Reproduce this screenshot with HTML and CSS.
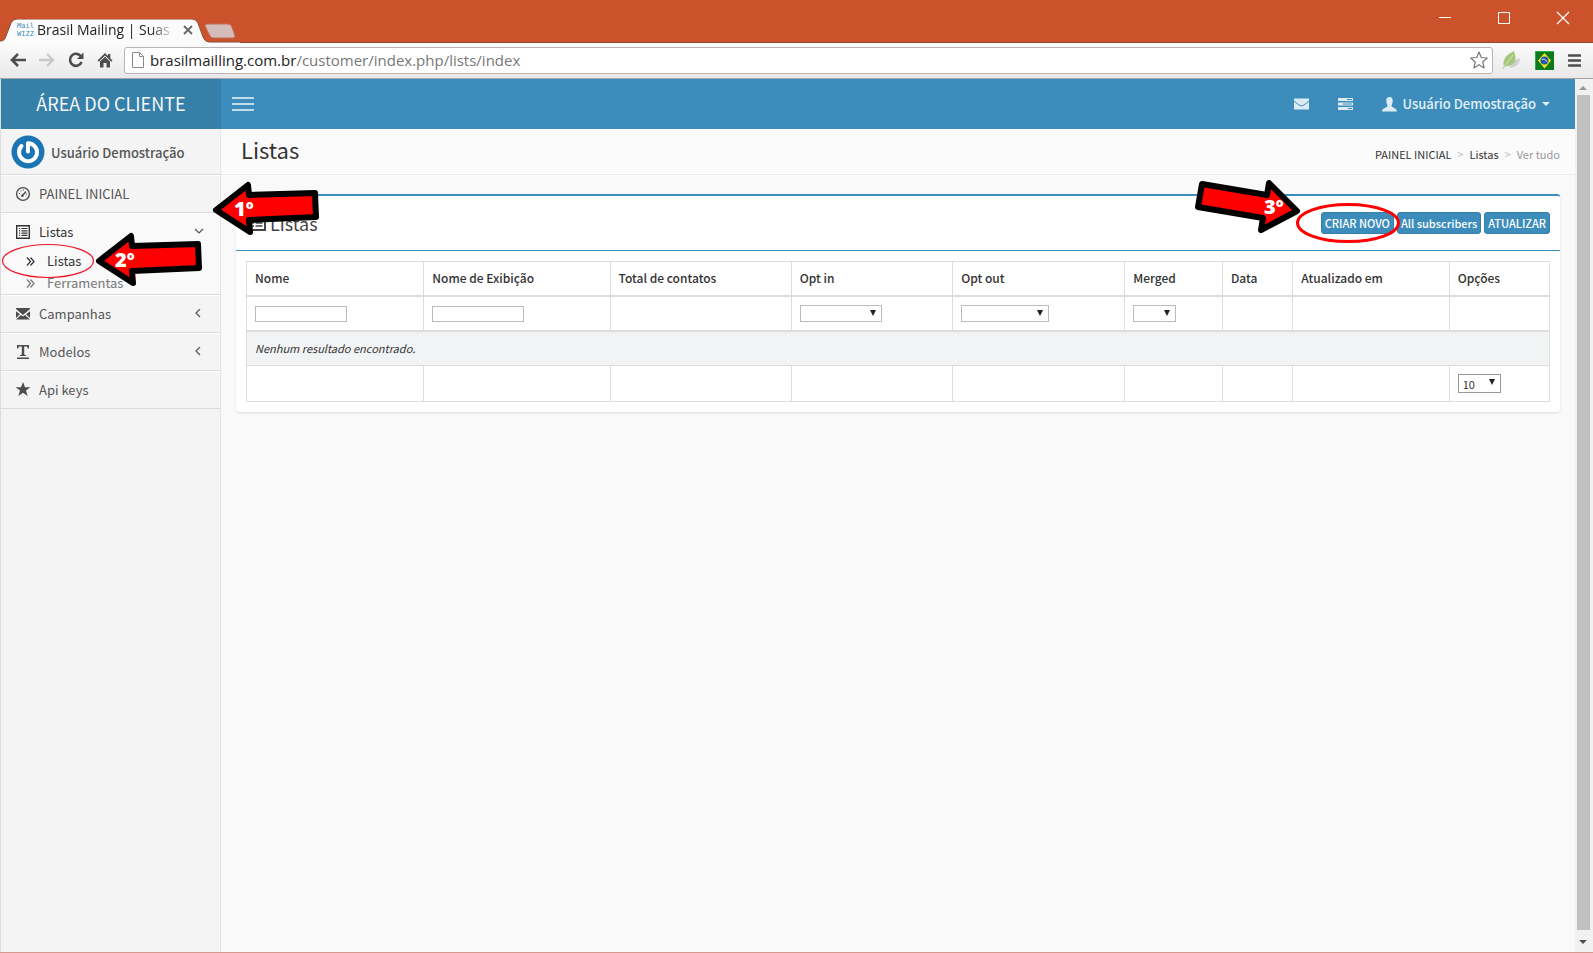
FILE: index.html
```html
<!DOCTYPE html>
<html lang="pt-BR">
<head>
<meta charset="utf-8">
<title>Brasil Mailing | Suas listas</title>
<link rel="stylesheet" href="styles.css">
</head>
<body>
<div class="window">
  <div class="titlebar">
    <svg class="tab-shape" width="240" height="24" viewBox="0 0 240 24">
      <path d="M0 24V22C4 22 5 20 6 17L11 4Q13 0 17 0H192Q196 0 198 4L203 18Q205 23 209 23H240V24Z" fill="#fbfbfb"/>
      <path d="M0 22C4 22 5 20 6 17L11 4Q13 0 17 0H192Q196 0 198 4L203 18Q205 23 209 23H240" fill="none" stroke="#8c4a34"/>
      <path d="M207 5H228Q231 5 232 8L235 17Q235 19 233 19H214Q211 19 210 17L205 7Q205 5 207 5Z" fill="#d3bcb9" stroke="#bd705a" stroke-width="1"/>
    </svg>
    <div class="tab">
      <span class="favicon">Mail<br>WIZZ</span>
      <span class="tab-title">Brasil Mailing | Suas</span>
      <button class="plain tab-close" aria-label="Fechar guia"><svg width="10" height="10" viewBox="0 0 10 10"><path d="M1 1L9 9M9 1L1 9" stroke="#666" stroke-width="1.800"/></svg></button>
    </div>
    <div class="win-controls">
      <button class="plain" aria-label="Minimizar"><svg width="14" height="14" viewBox="0 0 14 14"><path d="M1 6.500H13" stroke="#fff"/></svg></button>
      <button class="plain" aria-label="Maximizar"><svg width="14" height="14" viewBox="0 0 14 14"><path d="M1.500 1.500H12.500V12.500H1.500Z" stroke="#fff" fill="none"/></svg></button>
      <button class="plain" aria-label="Fechar"><svg width="14" height="14" viewBox="0 0 14 14"><path d="M1 1L13 13M13 1L1 13" stroke="#fff" stroke-width="1.200"/></svg></button>
    </div>
  </div>
  <div class="toolbar">
    <button class="plain" aria-label="Voltar"><svg width="16" height="14" viewBox="0 0 16 14"><path d="M8 1L2 7L8 13M2 7H16" fill="none" stroke="#4d4d4d" stroke-width="2.600"/></svg></button>
    <button class="plain" aria-label="Avançar"><svg width="16" height="14" viewBox="0 0 16 14"><path d="M8 1L14 7L8 13M14 7H0" fill="none" stroke="#c9c9c9" stroke-width="2.400"/></svg></button>
    <button class="plain" aria-label="Recarregar"><svg width="16" height="16" viewBox="0 0 16 16"><path d="M13 4.500A6 6 0 1 0 13.600 10" fill="none" stroke="#4d4d4d" stroke-width="2.600"/><path d="M15.500 0.500V7H9Z" fill="#4d4d4d"/></svg></button>
    <button class="plain" aria-label="Página inicial"><svg width="16" height="16" viewBox="0 0 16 16"><path d="M8 1L0.500 8.500L1.700 9.700L8 3.500L14.300 9.700L15.500 8.500L13.300 6.300V2H11V4Z" fill="#4d4d4d"/><path d="M3 9.500L8 4.700L13 9.500V15.500H9.500V11H6.500V15.500H3Z" fill="#4d4d4d"/></svg></button>
    <div class="address">
      <svg width="12" height="16" viewBox="0 0 12 16"><path d="M0.500 0.500H7.500L11.500 4.500V15.500H0.500ZM7.500 0.500V4.500H11.500" fill="#fff" stroke="#8a8a8a"/></svg>
      <span class="url"><span class="host">brasilmailling.com.br</span>/customer/index.php/lists/index</span>
      <svg width="18" height="18" viewBox="0 0 18 18"><path d="M9 1L11.300 6.500L17.300 7L12.700 11L14.100 16.900L9 13.700L3.900 16.900L5.300 11L0.700 7L6.700 6.500Z" fill="#fff" stroke="#777" stroke-width="1.200" stroke-linejoin="round"/></svg>
    </div>
    <div class="extensions">
      <svg width="19" height="20" viewBox="0 0 19 20"><path d="M7 18Q18 17 18 8Q14 9 10 12Z" fill="#cfcfcf"/><path d="M2 17Q-1 7 12 1Q15 9 12 13Q8 17 4 16L1 19L0.500 18Z" fill="#a5c87c"/><path d="M2 17L11 5" stroke="#d6e6bd"/></svg>
      <svg width="19" height="19" viewBox="0 0 19 19"><path d="M0 0H19V19H0Z" fill="#0a7a1c"/><path d="M0 0H19V1H1V19H0Z" fill="#2cae3b"/><path d="M9.500 2L16 9.500L9.500 17.500L3 9.500Z" fill="#f5e51b"/><circle cx="9.500" cy="9.500" r="4" fill="#2559a8"/><path d="M6.500 8Q10 7.500 12.500 11" fill="none" stroke="#cfe0f0"/></svg>
      <button class="plain" aria-label="Menu"><svg width="13" height="13" viewBox="0 0 13 13"><path d="M1 1.500H12M1 6.500H12M1 11.500H12" stroke="#4d4d4d" stroke-width="2.600" stroke-linecap="round"/></svg></button>
    </div>
  </div>

  <div class="viewport">
    <div class="page">
      <header class="topbar">
        <a class="logo" href="#">ÁREA DO CLIENTE</a>
        <nav class="navbar">
          <button class="plain burger" aria-label="Alternar menu"><svg width="22" height="14" viewBox="0 0 22 14"><path d="M0 1H22M0 7H22M0 13H22" stroke="#f0f6fa" stroke-width="1.500"/></svg></button>
          <div class="nav-right">
            <a href="#" aria-label="Mensagens"><svg width="15" height="12" viewBox="0 0 15 12"><path d="M0 0.500H15V11.500H0Z" fill="#dcebf4"/><path d="M0 3L5 7Q7.500 9 10 7L15 3" fill="none" stroke="#3c8dbc"/></svg></a>
            <a href="#" aria-label="Tarefas"><svg width="15" height="12" viewBox="0 0 15 12"><path d="M0 0H15V3H0ZM0 4.500H15V7.500H0ZM0 9H15V12H0Z" fill="#dcebf4"/><path d="M9 1.500H14M5 6H14M10 10.500H14" stroke="#3c8dbc"/></svg></a>
            <a class="account" href="#"><svg width="15" height="15" viewBox="0 0 15 15"><path d="M7.500 0C10 0 11 2 10.700 4.500C10.500 7 9.500 7.500 9.500 9C9.500 10.500 15 11 15 14.500H0C0 11 5.500 10.500 5.500 9C5.500 7.500 4.500 7 4.300 4.500C4 2 5 0 7.500 0Z" fill="#dcebf4"/></svg><b>Usuário Demostração</b><svg width="8" height="4" viewBox="0 0 8 4"><path d="M0 0H8L4 4Z" fill="#e4eff6"/></svg></a>
          </div>
        </nav>
      </header>

      <div class="columns">
        <aside class="sidebar">
          <div class="user">
            <svg width="34" height="34" viewBox="0 0 34 34"><circle cx="17" cy="17" r="16.500" fill="#1b75b5"/><path d="M17 16.500V8.200A9 9 0 1 1 10.500 11" fill="none" stroke="#fff" stroke-width="4" stroke-linecap="round" stroke-linejoin="round"/></svg>
            <span>Usuário Demostração</span>
          </div>
          <ul class="menu">
            <li><a href="#"><svg width="16" height="16" viewBox="0 0 16 16"><circle cx="8" cy="8" r="6.400" fill="none" stroke="#4d4d4d" stroke-width="1.400"/><path d="M7 10L11 5.500" stroke="#4d4d4d" stroke-width="1.400"/><circle cx="7.300" cy="9.700" r="1.300" fill="#4d4d4d"/><path d="M4 7.500H5M5.500 5H6.500M8 4H9M11 8H12" stroke="#4d4d4d"/></svg><span>PAINEL INICIAL</span></a></li>
            <li class="active"><a href="#"><svg width="16" height="16" viewBox="0 0 16 16"><path d="M1.700 1.700H14.300V14.300H1.700Z" fill="#fff" stroke="#333" stroke-width="1.400"/><path d="M4 4.500H5.200M4 6.800H5.200M4 9.100H5.200M4 11.400H5.200M6.500 4.500H12.500M6.500 6.800H12.500M6.500 9.100H12.500M6.500 11.400H12.500" stroke="#333" stroke-width="1.200"/></svg><span>Listas</span><svg class="chev" width="10" height="10" viewBox="0 0 10 10"><path d="M1 2L5 6L9 2" fill="none" stroke="#555" stroke-width="1.200"/></svg></a>
              <ul class="submenu">
                <li class="current"><a href="#"><svg width="9" height="9" viewBox="0 0 9 9"><path d="M1 0.500L4.500 4.500L1 8.500M4.500 0.500L8 4.500L4.500 8.500" fill="none" stroke="#333" stroke-width="1.200"/></svg>Listas</a></li>
                <li><a href="#"><svg width="9" height="9" viewBox="0 0 9 9"><path d="M1 0.500L4.500 4.500L1 8.500M4.500 0.500L8 4.500L4.500 8.500" fill="none" stroke="#777" stroke-width="1.200"/></svg>Ferramentas</a></li>
              </ul>
            </li>
            <li><a href="#"><svg width="16" height="16" viewBox="0 0 16 16"><path d="M1 2H15V3L8 9L1 3ZM1 5.300L5 8.200L1 12ZM15 5.300L11 8.200L15 12ZM1 13.500L6 9L8 10.400L10 9L15 13.500Z" fill="#4d4d4d"/></svg><span>Campanhas</span><svg class="chev" width="10" height="10" viewBox="0 0 10 10"><path d="M6 0L2 4L6 8" fill="none" stroke="#555" stroke-width="1.200"/></svg></a></li>
            <li><a href="#"><svg width="16" height="16" viewBox="0 0 16 16"><path d="M2 1H14V4.500H12.800L12 2.600H9.200V10.400L11 11.200V12H5V11.200L6.800 10.400V2.600H4L3.200 4.500H2ZM2 13.500H14V15H2Z" fill="#4d4d4d"/></svg><span>Modelos</span><svg class="chev" width="10" height="10" viewBox="0 0 10 10"><path d="M6 0L2 4L6 8" fill="none" stroke="#555" stroke-width="1.200"/></svg></a></li>
            <li><a href="#"><svg width="16" height="16" viewBox="0 0 16 16"><path d="M8 0L10 5.300H15.500L11 8.600L12.700 14L8 10.700L3.300 14L5 8.600L0.500 5.300H6Z" fill="#4d4d4d"/></svg><span>Api keys</span></a></li>
          </ul>
        </aside>

        <main class="content">
          <div class="content-header">
            <h1>Listas</h1>
            <nav class="breadcrumb"><a href="#">PAINEL INICIAL</a><i>&gt;</i><a href="#">Listas</a><i>&gt;</i><span>Ver tudo</span></nav>
          </div>
          <section class="box">
            <div class="box-header">
              <h2><svg width="18" height="16" viewBox="0 0 18 16"><path d="M1 1H17V15H1Z" fill="none" stroke="#444" stroke-width="2"/><path d="M4 5H6M4 8H6M4 11H6M7.500 5H14.500M7.500 8H14.500M7.500 11H14.500" stroke="#444" stroke-width="1.600"/></svg>Listas</h2>
              <div class="actions"><button class="btn">CRIAR NOVO</button><button class="btn">All subscribers</button><button class="btn">ATUALIZAR</button></div>
            </div>
            <div class="box-body">
              <table class="grid">
                <colgroup><col class="c-name"><col class="c-display"><col class="c-total"><col class="c-in"><col class="c-out"><col class="c-merged"><col class="c-date"><col class="c-updated"><col class="c-options"></colgroup>
                <thead>
                  <tr><th>Nome</th><th>Nome de Exibição</th><th>Total de contatos</th><th>Opt in</th><th>Opt out</th><th>Merged</th><th>Data</th><th>Atualizado em</th><th>Opções</th></tr>
                  <tr class="filters">
                    <td><input type="text" aria-label="Nome"></td>
                    <td><input type="text" aria-label="Nome de Exibição"></td>
                    <td></td>
                    <td><span class="select opt-in"><select aria-label="Opt in"><option></option></select></span></td>
                    <td><span class="select opt-out"><select aria-label="Opt out"><option></option></select></span></td>
                    <td><span class="select small"><select aria-label="Merged"><option></option></select></span></td>
                    <td></td><td></td><td></td>
                  </tr>
                </thead>
                <tbody><tr class="empty"><td colspan="9">Nenhum resultado encontrado.</td></tr></tbody>
                <tfoot><tr><td></td><td></td><td></td><td></td><td></td><td></td><td></td><td></td><td><span class="select small page-size"><select aria-label="Resultados por página"><option>10</option></select></span></td></tr></tfoot>
              </table>
            </div>
          </section>
        </main>
      </div>
    </div>
    <div class="scrollbar">
      <svg width="14" height="16" viewBox="0 0 14 16"><path d="M3 11L7 7L11 11Z" fill="#999"/></svg>
      <div class="thumb"></div>
      <svg width="14" height="22" viewBox="0 0 14 22"><path d="M3 10H11L7 14Z" fill="#505050"/></svg>
    </div>
  </div>

  <svg class="note note-1" width="110" height="60" viewBox="0 0 110 60"><path d="M6 30L38 5L39 15L105 13L106 37L39 40L40 52Z" fill="#f00" stroke="#000" stroke-width="6" stroke-linejoin="round"/><text x="24" y="36">1º</text></svg>
  <svg class="note note-2" width="110" height="60" viewBox="0 0 110 60"><path d="M6 30L38 5L39 15L105 13L106 37L39 40L40 52Z" fill="#f00" stroke="#000" stroke-width="6" stroke-linejoin="round"/><text x="22" y="36">2º</text></svg>
  <svg class="note note-3" width="110" height="60" viewBox="0 0 110 60"><path d="M10 7L75 18L77 6L105 34L69 53L71 41L6 30Z" fill="#f00" stroke="#000" stroke-width="6" stroke-linejoin="round"/><text x="72" y="37">3º</text></svg>
  <svg class="note ring-menu" width="94" height="36" viewBox="0 0 94 36"><ellipse cx="47" cy="18" rx="45.500" ry="16.500" fill="none" stroke="#f01020" stroke-width="1.200"/></svg>
  <svg class="note ring-button" width="106" height="42" viewBox="0 0 106 42"><ellipse cx="53" cy="21" rx="50.500" ry="18.500" fill="none" stroke="#f00" stroke-width="3"/></svg>
</div>
</body>
</html>
```
FILE: styles.css
```css
* { box-sizing: border-box; }
body {
  margin: 0;
  font: 13px/20px "Noto Sans CJK SC", "Noto Sans", sans-serif;
  color: #333;
}
a { color: inherit; text-decoration: none; }
ul { list-style: none; margin: 0; padding: 0; }
svg { display: block; flex: none; }
h1, h2 { margin: 0; font-weight: 400; }
.plain { border: 0; padding: 0; background: none; display: flex; }

.window { position: relative; display: flex; flex-direction: column; height: 100vh; overflow: hidden; border-bottom: 1px solid #d59a8b; }

.titlebar { position: relative; display: flex; justify-content: space-between; height: 43px; background: #cb522a; border-bottom: 1px solid #8c4a34; }
.tab-shape { position: absolute; left: 0; bottom: -1px; }
.tab { position: relative; display: flex; align-items: center; height: 22px; margin-top: 19px; padding-left: 17px; font: 14px/22px "Open Sans", sans-serif; color: #222; }
.favicon { width: 16px; margin-right: 4px; font: 7px/8px "DejaVu Sans Mono", monospace; color: #3c8dbc; }
.tab-title { width: 138px; white-space: nowrap; -webkit-mask-image: linear-gradient(90deg, #000 82%, transparent); mask-image: linear-gradient(90deg, #000 82%, transparent); }
.tab-close { margin-left: 8px; }
.win-controls { display: flex; gap: 45px; padding: 11px 23px 0 0; }

.toolbar { display: flex; align-items: center; gap: 13px; height: 36px; padding: 0 12px 1px 10px; background: linear-gradient(#fbfbfb, #e9e9e9); border-bottom: 1px solid #a5a5a5; }
.address { flex: 1; display: flex; align-items: center; gap: 6px; height: 27px; margin-left: -2px; padding: 0 4px 0 7px; background: #fff; border: 1px solid #b5b5b5; border-radius: 3px; }
.url { flex: 1; font: 15px/22px "Open Sans", sans-serif; color: #777; }
.host { color: #222; }
.extensions { display: flex; align-items: center; gap: 14px; margin-left: -4px; }

.viewport { flex: 1; display: flex; min-height: 0; border-left: 1px solid #dcdcdc; background: #f1f1f1; }
.page { flex: 1; display: flex; flex-direction: column; background: #f9f9f9; }
.scrollbar { display: flex; flex-direction: column; align-items: center; width: 18px; padding-right: 2px; }
.thumb { flex: 1; width: 13px; background: #c1c1c1; }

.topbar { display: flex; height: 50px; background: #3c8dbc; color: #f4f8fb; }
.logo { width: 220px; background: #367fa9; font-size: 18px; line-height: 48px; text-align: center; }
.navbar { flex: 1; display: flex; align-items: center; justify-content: space-between; padding: 0 25px 0 11px; }
.nav-right { display: flex; align-items: center; gap: 29px; }
.account { display: flex; align-items: center; gap: 6px; }
.account b { color: #e4f0f7; font-weight: 500; }

.columns { flex: 1; display: flex; }
.sidebar { width: 220px; background: #f4f4f4; border-right: 1px solid #e6e6e6; color: #555; }
.user { display: flex; align-items: center; gap: 6px; height: 46px; padding-left: 10px; border-bottom: 1px solid #dbdbdb; font-weight: 500; }
.user span { padding-top: 3px; }
.menu > li { border-top: 1px solid #fff; border-bottom: 1px solid #dbdbdb; }
.menu > li > a { display: flex; align-items: center; gap: 8px; height: 36px; padding: 0 16px 0 14px; }
.menu > .active { background: #f9f9f9; color: #333; }
.chev { margin-left: auto; }
.submenu { color: #777; }
.submenu a { display: flex; align-items: center; gap: 12px; height: 22px; padding-left: 25px; }
.submenu .current { color: #333; }

.content { flex: 1; }
.content-header { display: flex; justify-content: space-between; height: 46px; padding: 0 15px 0 20px; background: #fbfbfb; border-bottom: 1px solid #ececec; }
.content-header h1 { font-size: 22px; line-height: 41px; }
.breadcrumb { display: flex; gap: 6px; padding-top: 15px; font-size: 11px; color: #999; }
.breadcrumb a { color: #333; }
.breadcrumb i { font-style: normal; color: #bbb; }

.box { margin: 19px 15px 0; background: #fff; border-top: 2px solid #3c8dbc; border-radius: 3px; box-shadow: 0 1px 2px rgba(0, 0, 0, .12); }
.box-header { display: flex; justify-content: space-between; height: 55px; padding: 0 10px 0 12px; border-bottom: 1px solid #3c8dbc; }
.box-header h2 { display: flex; align-items: center; gap: 4px; height: 54px; font-size: 18px; color: #444; }
.actions { display: flex; gap: 3px; padding-top: 16px; }
.btn { height: 22px; padding: 0 3px 1px; border: 1px solid #367fa9; border-radius: 3px; background: #3c8dbc; color: #fff; font: 500 11px/18px "Noto Sans CJK SC", sans-serif; white-space: nowrap; }
.box-body { padding: 10px; }

.grid { width: 100%; table-layout: fixed; border-collapse: collapse; font-size: 12px; line-height: 18px; }
.grid th, .grid td { height: 35px; padding: 0 8px; border: 1px solid #ddd; text-align: left; vertical-align: middle; }
.grid th { height: 34px; border-bottom-width: 2px; font-weight: 500; }
.grid .filters td { border-bottom-width: 2px; }
.grid .empty td { background: #f2f3f5; font-size: 11px; font-style: italic; }
.grid tfoot td { height: 36px; }
.c-name { width: 13.6%; }
.c-display { width: 14.3%; }
.c-total { width: 13.9%; }
.c-in { width: 12.4%; }
.c-out { width: 13.2%; }
.c-merged { width: 7.5%; }
.c-date { width: 5.4%; }
.c-updated { width: 12%; }
.c-options { width: 7.7%; }
.grid input { display: block; width: 92px; height: 16px; margin-top: 2px; padding: 0 2px; border: 1px solid #bbb; background: #fff; }
.select { position: relative; display: block; width: 82px; }
.select.opt-out { width: 88px; }
.select.small { width: 43px; }
.select::after { content: ""; position: absolute; right: 6px; top: 5px; border: solid transparent; border-width: 6px 3px 0; border-top-color: #222; pointer-events: none; }
.select select { display: block; width: 100%; height: 17px; padding: 0 4px; border: 1px solid #bbb; border-radius: 0; background: #fff; color: #333; font: 11px/16px "Noto Sans CJK SC", sans-serif; appearance: none; }
.page-size select { height: 19px; border-color: #999; }

.note { position: absolute; pointer-events: none; }
.note text { fill: #fff; font: 800 20px "Open Sans", sans-serif; }
.note-1 { left: 210px; top: 180px; }
.note-2 { left: 93px; top: 231px; }
.note-3 { right: 291px; top: 177px; }
.ring-menu { left: 1px; top: 243px; }
.ring-button { right: 192px; top: 202px; }
```
